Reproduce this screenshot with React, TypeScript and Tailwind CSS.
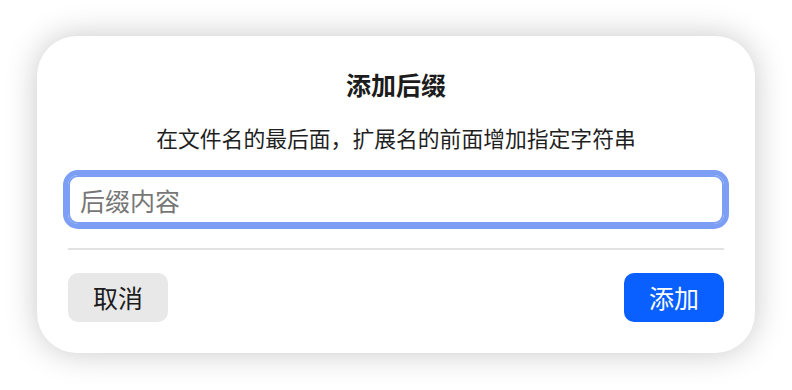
export default function App() {
  return (
    <main
      className="h-[390px] w-[792px] bg-white pl-[37px] pt-[36px]"
      style={{ fontFamily: '"Noto Sans CJK SC", "Noto Sans", sans-serif' }}
    >
      <section className="flex h-[317px] w-[718px] flex-col rounded-[40px] bg-white px-[31px] pb-[31px] pt-[32px] shadow-[0_0_32px_rgba(0,0,0,0.22)]">
        <h1 className="text-center text-[25px] font-bold leading-[32px] text-[#1c1c1c]">添加后缀</h1>
        <p className="mt-[23px] text-center text-[21.8px] leading-[30px] text-[#1f1f1f]">
          在文件名的最后面，扩展名的前面增加指定字符串
        </p>
        <input
          className="mt-[22px] h-[49px] w-full rounded-[10px] border-2 border-[#7c9ef5] px-[10px] text-[25px] text-[#222] shadow-[0_0_0_5px_#7c9ef5] outline-none placeholder:text-[#777]"
          placeholder="后缀内容"
        />
        <div className="mt-[24px] h-[2px] bg-[#e2e2e2]" />
        <div className="mt-[23px] flex items-center justify-between">
          <button className="h-[49px] w-[100px] rounded-[10px] bg-[#e8e8e8] text-[25px] text-[#1c1c1c]">
            取消
          </button>
          <button className="h-[49px] w-[100px] rounded-[10px] bg-[#0a5fff] text-[25px] text-white">
            添加
          </button>
        </div>
      </section>
    </main>
  );
}
